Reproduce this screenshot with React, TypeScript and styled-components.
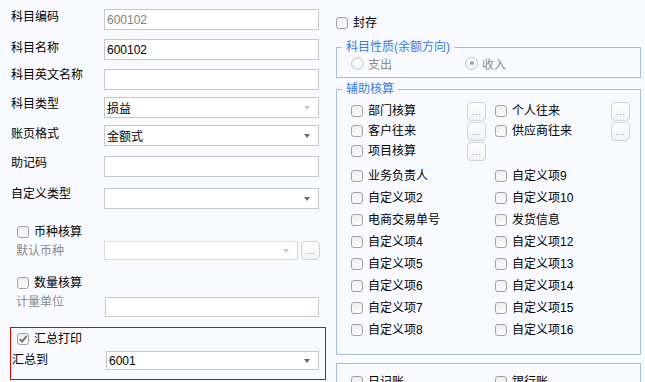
import React from 'react';
import styled, { createGlobalStyle } from 'styled-components';

const GlobalStyle = createGlobalStyle`
  html, body {
    margin: 0;
    padding: 0;
    background: #f8faff;
    overflow: hidden;
  }
  body {
    font-family: "Liberation Sans", "Noto Sans CJK SC", sans-serif;
    font-size: 12px;
    color: #000;
  }
`;

const Page = styled.div`
  width: 645px;
  height: 382px;
  display: flex;
  overflow: hidden;
  background: #f8faff;
`;

const LeftCol = styled.div`
  width: 336px;
  flex: none;
  box-sizing: border-box;
  padding: 9px 0 0 11px;
  display: flex;
  flex-direction: column;
`;

const RightCol = styled.div`
  width: 305px;
  flex: none;
  padding-top: 15px;
  display: flex;
  flex-direction: column;
`;

const FieldRow = styled.div<{ $mt?: number }>`
  display: flex;
  align-items: flex-start;
  margin-top: ${p => p.$mt ?? 0}px;
`;

const Label = styled.span<{ $muted?: boolean; $dy?: number; $indent?: number; $w?: number }>`
  width: ${p => p.$w ?? 93}px;
  flex: none;
  box-sizing: border-box;
  padding-left: ${p => p.$indent ?? 0}px;
  line-height: 16px;
  margin-top: ${p => p.$dy ?? 0}px;
  color: ${p => (p.$muted ? '#8c8c8c' : '#000')};
  white-space: nowrap;
`;

const TextBox = styled.div<{ $disabled?: boolean; $faint?: boolean; $w?: number; $h?: number; $ml?: number }>`
  width: ${p => p.$w ?? 215}px;
  height: ${p => p.$h ?? 21}px;
  margin-left: ${p => p.$ml ?? 0}px;
  box-sizing: border-box;
  border: 1px solid ${p => (p.$faint ? '#d8dade' : '#c6c8cc')};
  background: #fff;
  padding: 0 0 0 2px;
  display: flex;
  align-items: center;
  color: ${p => (p.$disabled ? '#808080' : '#000')};
  white-space: nowrap;
`;

const Arrow = styled.span<{ $light?: boolean }>`
  margin-left: auto;
  margin-right: 8px;
  width: 0;
  height: 0;
  border-left: 3.5px solid transparent;
  border-right: 3.5px solid transparent;
  border-top: 4px solid ${p => (p.$light ? '#c9c9c9' : '#6a6a6a')};
`;

const DotsButton = styled.div<{ $ml?: number }>`
  width: 19px;
  height: 19px;
  margin-left: ${p => p.$ml ?? 0}px;
  box-sizing: border-box;
  border: 1px solid #cfd3d9;
  border-radius: 4px;
  background: linear-gradient(#ffffff, #f1f2f4);
  display: flex;
  justify-content: center;
  align-items: flex-end;
  padding-bottom: 3px;
  font-size: 9px;
  line-height: 9px;
  letter-spacing: 0.5px;
  color: #7a93c2;
`;

const CheckItem = styled.label<{ $muted?: boolean }>`
  display: flex;
  align-items: center;
  height: 16px;
  line-height: 16px;
  white-space: nowrap;
  color: ${p => (p.$muted ? '#8c8c8c' : '#000')};
`;

const Box = styled.span`
  width: 12px;
  height: 12px;
  flex: none;
  box-sizing: border-box;
  border: 1px solid #a3a3a3;
  border-radius: 3px;
  background: linear-gradient(#eeeeee, #fbfbfb);
  margin-right: 5px;
  display: flex;
  align-items: center;
  justify-content: center;
`;

const RadioDot = styled.span<{ $checked?: boolean }>`
  width: 13px;
  height: 13px;
  flex: none;
  box-sizing: border-box;
  border: 1px solid #c4c6ca;
  border-radius: 50%;
  background: radial-gradient(circle at 50% 40%, #ffffff, #ececec);
  margin-right: 4px;
  display: flex;
  align-items: center;
  justify-content: center;
  &::after {
    content: '';
    display: ${p => (p.$checked ? 'block' : 'none')};
    width: 4px;
    height: 4px;
    border-radius: 50%;
    background: #a0a0a0;
  }
`;

const CheckRow = styled.div<{ $mt?: number; $ml?: number }>`
  display: flex;
  margin-top: ${p => p.$mt ?? 0}px;
  margin-left: ${p => p.$ml ?? 0}px;
`;

const SumBox = styled.div`
  margin: 10px 0 0 -1px;
  width: 316px;
  box-sizing: border-box;
  border: 1px solid #e30000;
  padding: 3px 0 9px 0;
  display: flex;
  flex-direction: column;
`;

const Group = styled.section<{ $h: number; $mt?: number; $pt?: number }>`
  position: relative;
  margin-top: ${p => p.$mt ?? 0}px;
  padding-top: ${p => p.$pt ?? 0}px;
  width: 305px;
  height: ${p => p.$h}px;
  box-sizing: border-box;
  border: 1px solid #a9bed9;
  flex: none;
`;

/* caption sits over the top border, like a groupbox title */
const Caption = styled.span`
  position: absolute;
  top: -9px;
  left: 5px;
  padding: 0 4px;
  line-height: 16px;
  background: #f8faff;
  color: #3a7be3;
  white-space: nowrap;
`;

const RadioRow = styled.div`
  display: flex;
  padding-left: 14px;
`;

const RadioItem = styled.label<{ $w?: number }>`
  width: ${p => (p.$w ? `${p.$w}px` : 'auto')};
  display: flex;
  align-items: center;
  height: 16px;
  color: #8c8c8c;
`;

const AuxGrid = styled.div`
  display: grid;
  grid-template-columns: 116px 28px 116px 19px;
  grid-auto-rows: 20px;
  align-items: center;
  padding-left: 14px;
`;

const FlagGrid = styled.div<{ $mt?: number }>`
  display: grid;
  grid-template-columns: 144px 1fr;
  grid-auto-rows: 22px;
  align-items: center;
  padding-left: 14px;
  margin-top: ${p => p.$mt ?? 0}px;
`;

const Check = ({ text, checked, muted }: { text: string; checked?: boolean; muted?: boolean }) => (
  <CheckItem $muted={muted}>
    <Box>
      {checked && (
        <svg width="10" height="10" viewBox="0 0 10 10">
          <path d="M1.6 5.2 L4 7.6 L8.6 2.2" fill="none" stroke="#6f6f6f" strokeWidth="1.8" />
        </svg>
      )}
    </Box>
    {text}
  </CheckItem>
);

const Dots = () => <DotsButton>...</DotsButton>;

const flags: [string, string][] = [
  ['业务负责人', '自定义项9'],
  ['自定义项2', '自定义项10'],
  ['电商交易单号', '发货信息'],
  ['自定义项4', '自定义项12'],
  ['自定义项5', '自定义项13'],
  ['自定义项6', '自定义项14'],
  ['自定义项7', '自定义项15'],
  ['自定义项8', '自定义项16'],
];

export default function App() {
  return (
    <>
      <GlobalStyle />
      <Page>
        <LeftCol>
          <FieldRow>
            <Label>科目编码</Label>
            <TextBox $disabled>600102</TextBox>
          </FieldRow>
          <FieldRow $mt={9}>
            <Label $dy={1}>科目名称</Label>
            <TextBox>600102</TextBox>
          </FieldRow>
          <FieldRow $mt={9}>
            <Label $dy={-2}>科目英文名称</Label>
            <TextBox />
          </FieldRow>
          <FieldRow $mt={7}>
            <Label $dy={-1}>科目类型</Label>
            <TextBox>
              损益
              <Arrow $light />
            </TextBox>
          </FieldRow>
          <FieldRow $mt={7}>
            <Label $dy={1}>账页格式</Label>
            <TextBox>
              金额式
              <Arrow />
            </TextBox>
          </FieldRow>
          <FieldRow $mt={10}>
            <Label $dy={-1}>助记码</Label>
            <TextBox />
          </FieldRow>
          <FieldRow $mt={11}>
            <Label $dy={-2}>自定义类型</Label>
            <TextBox>
              <Arrow />
            </TextBox>
          </FieldRow>

          <CheckRow $mt={15} $ml={6}>
            <Check text="币种核算" />
          </CheckRow>
          <FieldRow $mt={1}>
            <Label $muted $indent={5} $dy={2}>默认币种</Label>
            <TextBox $faint $w={194} $h={19}>
              <Arrow $light />
            </TextBox>
            <DotsButton $ml={3}>...</DotsButton>
          </FieldRow>

          <CheckRow $mt={15} $ml={6}>
            <Check text="数量核算" />
          </CheckRow>
          <FieldRow $mt={6}>
            <Label $muted $indent={5} $dy={-3}>计量单位</Label>
            <TextBox $w={214} $h={20} $ml={1} />
          </FieldRow>

          <SumBox>
            <CheckRow $ml={6}>
              <Check text="汇总打印" checked />
            </CheckRow>
            <FieldRow $mt={4}>
              <Label $indent={1} $w={95} $dy={1}>汇总到</Label>
              <TextBox $w={213} $h={19}>
                6001
                <Arrow />
              </TextBox>
            </FieldRow>
          </SumBox>
        </LeftCol>

        <RightCol>
          <CheckRow>
            <Check text="封存" />
          </CheckRow>

          <Group $h={31} $mt={16} $pt={7}>
            <Caption>科目性质(余额方向)</Caption>
            <RadioRow>
              <RadioItem $w={114}>
                <RadioDot />
                支出
              </RadioItem>
              <RadioItem>
                <RadioDot $checked />
                收入
              </RadioItem>
            </RadioRow>
          </Group>

          <Group $h={266} $mt={11} $pt={11}>
            <Caption>辅助核算</Caption>
            <AuxGrid>
              <Check text="部门核算" />
              <Dots />
              <Check text="个人往来" />
              <Dots />
              <Check text="客户往来" />
              <Dots />
              <Check text="供应商往来" />
              <Dots />
              <Check text="项目核算" />
              <Dots />
            </AuxGrid>
            <FlagGrid $mt={4}>
              {flags.map(([a, b]) => (
                <React.Fragment key={a}>
                  <Check text={a} />
                  <Check text={b} />
                </React.Fragment>
              ))}
            </FlagGrid>
          </Group>

          <Group $h={60} $mt={8} $pt={7}>
            <FlagGrid>
              <Check text="日记账" />
              <Check text="银行账" />
            </FlagGrid>
          </Group>
        </RightCol>
      </Page>
    </>
  );
}
